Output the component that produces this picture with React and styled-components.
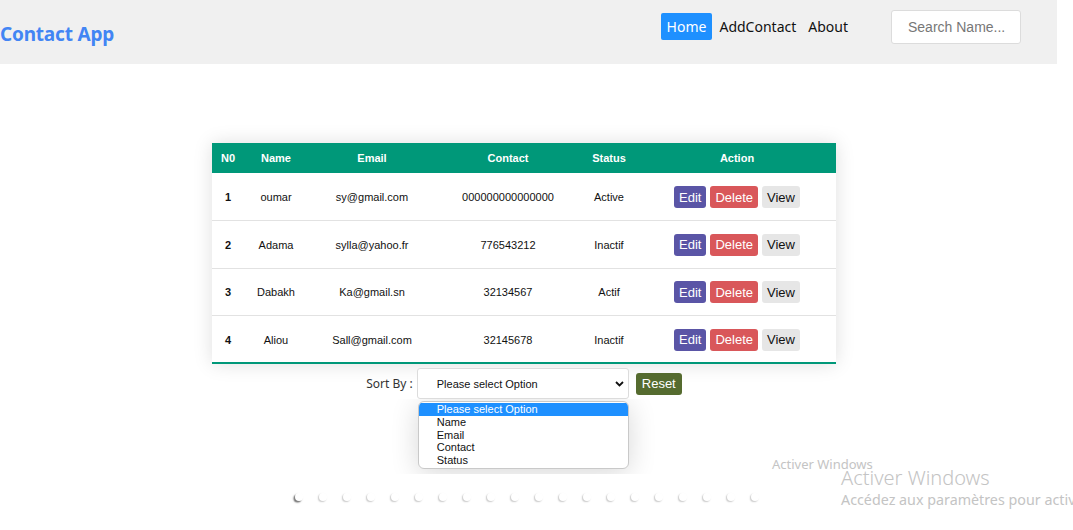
import React from 'react';
import styled, { createGlobalStyle } from 'styled-components';

const contacts = [
  { id: 1, name: 'oumar', email: 'sy@gmail.com', contact: '000000000000000', status: 'Active' },
  { id: 2, name: 'Adama', email: 'sylla@yahoo.fr', contact: '776543212', status: 'Inactif' },
  { id: 3, name: 'Dabakh', email: 'Ka@gmail.sn', contact: '32134567', status: 'Actif' },
  { id: 4, name: 'Aliou', email: 'Sall@gmail.com', contact: '32145678', status: 'Inactif' },
];

const options = ['Please select Option', 'Name', 'Email', 'Contact', 'Status'];

const App = () => {
  return (
    <>
      <GlobalStyle />
      <Header>
        <Logo>Contact App</Logo>
        <Nav>
          <NavItem $active>Home</NavItem>
          <NavItem>AddContact</NavItem>
          <NavItem>About</NavItem>
          <Search placeholder="Search Name..." />
        </Nav>
      </Header>

      <Main>
        <TableCard>
          <Table>
            <colgroup>
              <col style={{ width: 32 }} />
              <col style={{ width: 64 }} />
              <col style={{ width: 128 }} />
              <col style={{ width: 144 }} />
              <col style={{ width: 58 }} />
              <col style={{ width: 198 }} />
            </colgroup>
            <thead>
              <tr>
                <Th>N0</Th>
                <Th>Name</Th>
                <Th>Email</Th>
                <Th>Contact</Th>
                <Th>Status</Th>
                <Th>Action</Th>
              </tr>
            </thead>
            <tbody>
              {contacts.map((c) => (
                <Row key={c.id}>
                  <Td $bold>{c.id}</Td>
                  <Td>{c.name}</Td>
                  <Td>{c.email}</Td>
                  <Td>{c.contact}</Td>
                  <Td>{c.status}</Td>
                  <Td>
                    <Actions>
                      <ActionButton $variant="edit">Edit</ActionButton>
                      <ActionButton $variant="delete">Delete</ActionButton>
                      <ActionButton $variant="view">View</ActionButton>
                    </Actions>
                  </Td>
                </Row>
              ))}
            </tbody>
          </Table>
        </TableCard>

        <SortRow>
          <SortLabel>Sort By :</SortLabel>
          <SelectWrap>
            <Select defaultValue="">
              <option value="">Please select Option</option>
              <option value="name">Name</option>
              <option value="email">Email</option>
              <option value="contact">Contact</option>
              <option value="status">Status</option>
            </Select>
            <Chevron width="9" height="6" viewBox="0 0 9 6">
              <path d="M1 1l3.5 3.5L8 1" fill="none" stroke="#111" strokeWidth="1.8" />
            </Chevron>
            <PopupShade>
              <OptionList>
                {options.map((o, i) => (
                  <OptionItem key={o} $selected={i === 0}>{o}</OptionItem>
                ))}
              </OptionList>
            </PopupShade>
          </SelectWrap>
          <ResetButton>Reset</ResetButton>
        </SortRow>

        <Dots>
          {Array.from({ length: 20 }).map((_, i) => (
            <Dot key={i} $first={i === 0} />
          ))}
        </Dots>
      </Main>

      <Watermark>
        <WatermarkSmall>Activer Windows</WatermarkSmall>
        <WatermarkTitle>Activer Windows</WatermarkTitle>
        <WatermarkText>Accédez aux paramètres pour activer Windows.</WatermarkText>
      </Watermark>
    </>
  );
};

export default App;

const GlobalStyle = createGlobalStyle`
  html, body {
    margin: 0;
    padding: 0;
    background: #fff;
    overflow: hidden;
  }
  body {
    width: 1073px;
    height: 530px;
    position: relative;
    font-family: "Liberation Sans", Arial, sans-serif;
  }
`;

const Header = styled.header`
  display: flex;
  align-items: center;
  justify-content: space-between;
  width: 1057px;
  height: 64px;
  padding-right: 36px;
  box-sizing: border-box;
  background: #f0f0f0;
`;

const Logo = styled.h1`
  margin: 4px 0 0 0;
  font-family: "Noto Sans", sans-serif;
  font-size: 19px;
  font-weight: 700;
  color: #4285f4;
  letter-spacing: -0.2px;
`;

const Nav = styled.nav`
  display: flex;
  align-items: center;
  margin-bottom: 11px;
`;

const NavItem = styled.a`
  padding: 4px 6px;
  margin-right: ${(p) => (p.$active ? '1px' : '0')};
  border-radius: 2px;
  font-family: "Noto Sans", sans-serif;
  font-size: 14px;
  color: ${(p) => (p.$active ? '#fff' : '#111')};
  background: ${(p) => (p.$active ? '#1e90ff' : 'transparent')};
  cursor: pointer;
`;

const Search = styled.input`
  width: 130px;
  height: 34px;
  margin-left: 37px;
  padding: 0 0 0 16px;
  box-sizing: border-box;
  border: 1px solid #dcdcdc;
  border-radius: 3px;
  background: #fff;
  font-family: "Liberation Sans", Arial, sans-serif;
  font-size: 14px;
  outline: none;

  &::placeholder {
    color: #777;
  }
`;

const Main = styled.main`
  display: flex;
  flex-direction: column;
  padding: 79px 0 0 212px;
`;

const TableCard = styled.div`
  width: 624px;
  background: #fff;
  box-shadow: 0 0 18px rgba(0, 0, 0, 0.13);
`;

const Table = styled.table`
  width: 100%;
  border-collapse: collapse;
  table-layout: fixed;
  font-size: 11px;
  text-align: center;

  tbody tr:last-of-type {
    border-bottom: 2px solid #009879;
  }
`;

const Th = styled.th`
  height: 30px;
  padding: 0;
  background: #009879;
  color: #fff;
  font-weight: 700;
`;

const Row = styled.tr`
  height: 47.6px;
  border-bottom: 1px solid #e2e2e2;
`;

const Td = styled.td`
  padding: 1px 0 0;
  color: #111;
  font-weight: ${(p) => (p.$bold ? 700 : 400)};
`;

const Actions = styled.div`
  display: flex;
  justify-content: center;
  gap: 4px;
`;

const actionColors = {
  edit: { bg: '#5a55a6', fg: '#fff' },
  delete: { bg: '#d9575a', fg: '#fff' },
  view: { bg: '#e6e6e6', fg: '#111' },
};

const ActionButton = styled.button`
  height: 22px;
  padding: 0 5px;
  border: none;
  border-radius: 3px;
  background: ${(p) => actionColors[p.$variant].bg};
  color: ${(p) => actionColors[p.$variant].fg};
  font-family: "Liberation Sans", Arial, sans-serif;
  font-size: 13px;
  cursor: pointer;
`;

const SortRow = styled.div`
  display: flex;
  align-items: center;
  justify-content: center;
  width: 624px;
  margin-top: 4px;
`;

const SortLabel = styled.span`
  margin-right: 4px;
  font-family: "Noto Sans", sans-serif;
  font-size: 12px;
  color: #333;
`;

const SelectWrap = styled.div`
  position: relative;
  width: 212px;
  height: 31px;
`;

const Select = styled.select`
  appearance: none;
  width: 100%;
  height: 100%;
  padding: 0 0 0 19px;
  border: 1px solid #dcdcdc;
  border-radius: 3px;
  background: #fff;
  font-family: "Liberation Sans", Arial, sans-serif;
  font-size: 11px;
  color: #111;
  outline: none;
`;

const Chevron = styled.svg`
  position: absolute;
  right: 5px;
  top: 13px;
  pointer-events: none;
`;

const PopupShade = styled.div`
  position: absolute;
  top: 31px;
  left: -37px;
  width: 286px;
  height: 75px;
  overflow: hidden;
  padding: 2px 0 0 38px;
  box-sizing: border-box;
  pointer-events: none;
`;

const OptionList = styled.ul`
  width: 211px;
  margin: 0;
  padding: 1px 0 2px;
  list-style: none;
  box-sizing: border-box;
  background: #fff;
  border: 1px solid #c9c9c9;
  border-radius: 6px;
  overflow: hidden;
  box-shadow: 0 4px 28px rgba(0, 0, 0, 0.16);
`;

const OptionItem = styled.li`
  height: 12.6px;
  padding-left: 18px;
  font-size: 11px;
  line-height: 12.6px;
  color: ${(p) => (p.$selected ? '#fff' : '#111')};
  background: ${(p) => (p.$selected ? '#1e90ff' : 'transparent')};
`;

const ResetButton = styled.button`
  height: 22px;
  margin-left: 7px;
  padding: 0 6px;
  border: none;
  border-radius: 3px;
  background: #556b2f;
  color: #fff;
  font-family: "Liberation Sans", Arial, sans-serif;
  font-size: 13px;
  cursor: pointer;
`;

const Dots = styled.div`
  display: flex;
  gap: 16px;
  margin: 94px 0 0 83px;
`;

const Dot = styled.span`
  width: 8px;
  height: 8px;
  border-radius: 50%;
  background: #fff;
  box-shadow: ${(p) =>
    p.$first
      ? '-1.5px 1.5px 1.5px rgba(0, 0, 0, 0.55)'
      : '-1px 1px 1.5px rgba(0, 0, 0, 0.22)'};
`;

const Watermark = styled.div`
  position: absolute;
  left: 772px;
  top: 456px;
  font-family: "Noto Sans", sans-serif;
  color: #c4c4c4;
  white-space: nowrap;
  pointer-events: none;
`;

const WatermarkSmall = styled.div`
  font-size: 13px;
  line-height: 16px;
`;

const WatermarkTitle = styled.div`
  margin: -6px 0 0 69px;
  font-size: 20px;
  line-height: 24px;
  font-weight: 300;
`;

const WatermarkText = styled.div`
  margin: 0 0 0 69px;
  font-size: 14.3px;
  line-height: 20px;
`;
